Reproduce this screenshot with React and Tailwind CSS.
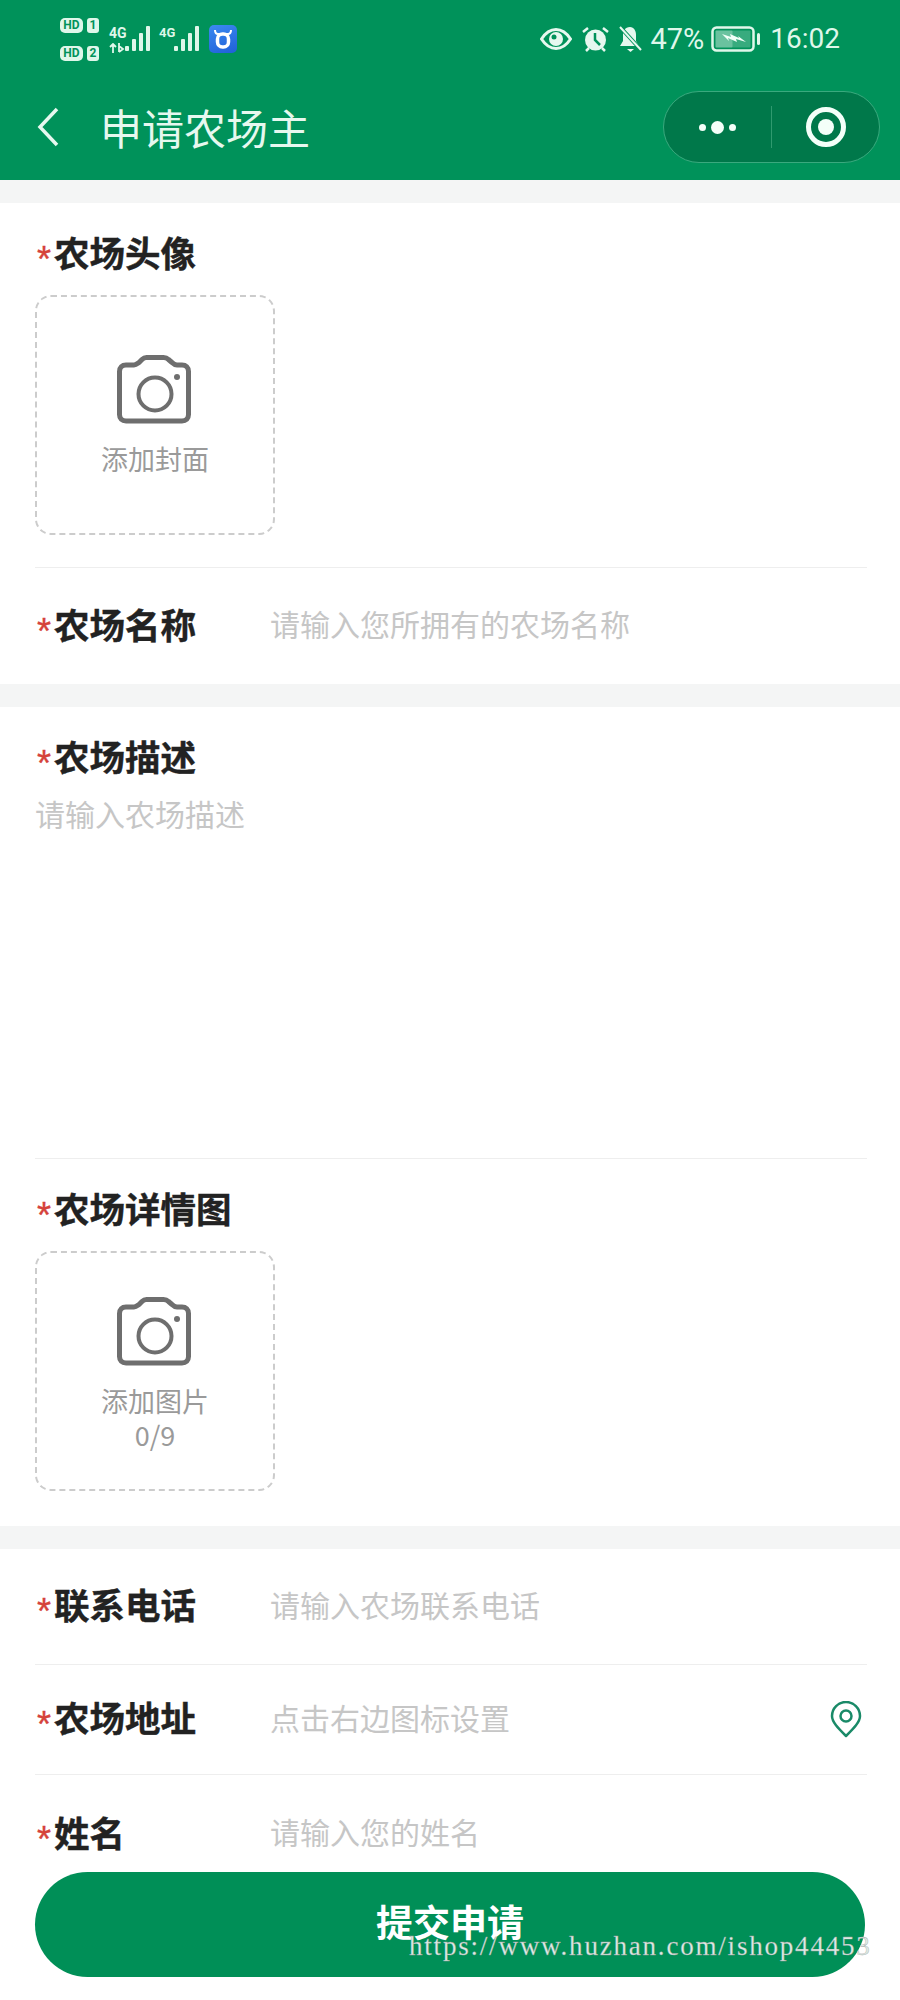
const cjk = "font-['Noto_Sans_CJK_SC',sans-serif]";

// Signal strength bars, heights taken from the status bar
function SignalBars() {
  return (
    <svg width="25" height="26" viewBox="0 0 25 26" fill="#dff7ea">
      <rect x="0" y="20" width="4" height="5" rx="1" />
      <rect x="7" y="13" width="4" height="12" rx="1" />
      <rect x="14" y="7" width="4" height="18" rx="1" />
      <rect x="21" y="0" width="4" height="25" rx="1" />
    </svg>
  );
}

function HdBadge({ n }) {
  return (
    <div className="flex items-center gap-[4px] h-[15px]">
      <span className="w-[23px] h-[15px] rounded-[5px] bg-[#dff7ea] text-[#00925a] text-[12px] leading-[15px] font-bold text-center font-['Roboto',sans-serif]">HD</span>
      <span className="w-[12px] h-[15px] rounded-[3px] bg-[#dff7ea] text-[#00925a] text-[12px] leading-[15px] font-bold text-center font-['Roboto',sans-serif]">{n}</span>
    </div>
  );
}

function StatusBar() {
  return (
    <div className="h-[80px] pl-[60px] pr-[60px] flex justify-between items-start text-[#dff7ea]">
      <div className="flex items-start pt-[18px]">
        <div className="flex flex-col gap-[13px]">
          <HdBadge n="1" />
          <HdBadge n="2" />
        </div>
        <div className="ml-[10px] mt-[8px] w-[16px]">
          <div className="text-[14px] leading-[14px] font-bold font-['Roboto',sans-serif]">4G</div>
          <svg className="mt-[3px]" width="16" height="10" viewBox="0 0 16 10" fill="none" stroke="#dff7ea" strokeWidth="1.800">
            <path d="M4 10V1M1 4l3-3 3 3M10 0v9M10 9l4-3-4-3" />
          </svg>
        </div>
        <div className="mt-[8px]"><SignalBars /></div>
        <div className="ml-[9px] mt-[8px] w-[15px] text-[13px] leading-[14px] font-bold font-['Roboto',sans-serif]">4G</div>
        <div className="mt-[8px]"><SignalBars /></div>
        <div className="ml-[10px] mt-[7px] w-[28px] h-[28px] rounded-[5px] bg-[linear-gradient(160deg,#3c8af0,#1f60d8)] flex items-center justify-center">
          <svg width="20" height="20" viewBox="0 0 20 20" fill="none">
            <path d="M2 1c0 3 1 4 3 4h10c2 0 3-1 3-4" stroke="#fff" strokeWidth="2" />
            <rect x="4.500" y="5" width="11" height="13" rx="5" stroke="#fff" strokeWidth="3.500" />
          </svg>
        </div>
      </div>
      <div className="flex items-center mt-[25px] h-[28px]">
        <svg width="32" height="24" viewBox="0 0 32 24" fill="none">
          <path d="M1.500 12C6 5 11 2.500 16 2.500S26 5 30.500 12C26 19 21 21.500 16 21.500S6 19 1.500 12Z" stroke="#e6f8ef" strokeWidth="3" />
          <circle cx="16" cy="12" r="7" fill="#e6f8ef" />
          <circle cx="14" cy="10" r="2.500" fill="#00925a" />
        </svg>
        <svg className="ml-[10px]" width="27" height="27" viewBox="0 0 27 27" fill="none">
          <circle cx="13.500" cy="14" r="10.500" fill="#e6f8ef" />
          <path d="M13 7v7l5 5" stroke="#00925a" strokeWidth="2.500" />
          <path d="M1 6l5-4M26 6l-5-4M4 25l3-3M23 25l-3-3" stroke="#e6f8ef" strokeWidth="2.500" />
        </svg>
        <svg className="ml-[9px]" width="25" height="28" viewBox="0 0 25 28" fill="none">
          <path d="M12 2c-5 0-7 4-7 8v6l-3 5h19l-3-5v-6c0-4-2-8-6-8Z" fill="#e6f8ef" />
          <path d="M9 24h7l-3.500 3Z" fill="#e6f8ef" />
          <path d="M3 3l20 22" stroke="#00925a" strokeWidth="4" />
          <path d="M2 2l21 23" stroke="#e6f8ef" strokeWidth="2" />
        </svg>
        <span className="ml-[7px] text-[29px] leading-none font-['Roboto',sans-serif]">47%</span>
        <svg className="ml-[7px]" width="49" height="26" viewBox="0 0 49 26" fill="none">
          <rect x="1.500" y="1.500" width="41" height="23" rx="4" stroke="#dff7ea" strokeWidth="2.500" />
          <rect x="4.500" y="4.500" width="35" height="17" rx="1" fill="#dff7ea" opacity="0.25" />
          <rect x="4.500" y="4.500" width="17" height="17" rx="1" fill="#dff7ea" opacity="0.3" />
          <path d="M11 8l9 3-1-3 9 4-1-2 8 6-10-3 1 3-9-4 1 3Z" fill="#f2fff8" />
          <rect x="46" y="7" width="3" height="12" rx="1.500" fill="#dff7ea" />
        </svg>
        <span className="ml-[10px] text-[28px] leading-none font-['Roboto',sans-serif]">16:02</span>
      </div>
    </div>
  );
}

function NavBar() {
  return (
    <div className="h-[100px] flex items-start text-[#e6f8ef]">
      <svg className="ml-[37px] mt-[27px]" width="22" height="40" viewBox="0 0 22 40" fill="none">
        <path d="M20 2L3 20l17 18" stroke="#e6f8ef" strokeWidth="3.500" />
      </svg>
      <span className={`ml-[41px] mt-[19px] text-[42px] leading-[56px] ${cjk}`}>申请农场主</span>
      <div className="ml-auto mr-[20px] mt-[11px] w-[217px] h-[72px] rounded-full bg-[#00784a] border border-[#3aa97e] flex items-center">
        <div className="w-[107px] flex items-center justify-center gap-[5px]">
          <span className="w-[7px] h-[7px] rounded-full bg-[#f4fff9]" />
          <span className="w-[13px] h-[13px] rounded-full bg-[#f4fff9]" />
          <span className="w-[7px] h-[7px] rounded-full bg-[#f4fff9]" />
        </div>
        <div className="w-px h-[42px] bg-[#2f9a6f]" />
        <div className="flex-1 flex items-center justify-center">
          <span className="w-[40px] h-[40px] rounded-full border-[5px] border-[#f4fff9] flex items-center justify-center">
            <span className="w-[16px] h-[16px] rounded-full bg-[#f4fff9]" />
          </span>
        </div>
      </div>
    </div>
  );
}

function FieldLabel({ text }) {
  return (
    <div className={`flex items-center h-[50px] text-[35.500px] font-bold text-[#222222] [-webkit-text-stroke:0.4px_#222222] ${cjk}`}>
      <span className="w-[19px] pl-[2px] mt-[11px] text-[36px] font-normal text-[#d5423a] [-webkit-text-stroke:0.4px_#d5423a] font-['Liberation_Sans',sans-serif]">*</span>
      <span className="whitespace-nowrap pb-[5px]">{text}</span>
    </div>
  );
}

function CameraIcon() {
  return (
    <svg width="78" height="70" viewBox="0 0 78 70" fill="none">
      <path
        d="M10 10h8c2 0 3-1 5-2.500l3-3c1.500-1.500 2.500-2 4.500-2h17c2 0 3.500 .5 5 2l3.500 3c1.500 1.500 3 2.500 5 2.500h5c4 0 6.500 2.500 6.500 6.500v43c0 4-2.500 6.500-6.500 6.500H10c-4 0-6.500-2.500-6.500-6.500v-43C3.500 12.500 6 10 10 10Z"
        stroke="#6e6e6e"
        strokeWidth="5"
        strokeLinejoin="round"
      />
      <circle cx="39" cy="39" r="16.500" stroke="#6e6e6e" strokeWidth="4" />
      <circle cx="61" cy="22" r="3" fill="#6e6e6e" />
    </svg>
  );
}

function UploadBox({ lines, className }) {
  return (
    <div className={`w-[240px] h-[240px] rounded-[16px] border-2 border-dashed border-[#cccccc] flex flex-col items-center ${className}`}>
      <CameraIcon />
      <div className={`mt-[17px] text-[27px] leading-[34px] text-[#9a9a9a] text-center ${cjk}`}>
        {lines.map((line) => (
          <div key={line}>{line}</div>
        ))}
      </div>
    </div>
  );
}

function InputRow({ label, placeholder, className, children }) {
  return (
    <div className={`flex items-center ${className}`}>
      <div className="w-[235px]"><FieldLabel text={label} /></div>
      <span className={`pb-[5px] text-[30px] text-[#c6c6c6] ${cjk}`}>{placeholder}</span>
      {children}
    </div>
  );
}

const Divider = () => <div className="h-px bg-[#eeeeee]" />;
const Gap = () => <div className="h-[23px] bg-[#f4f5f5]" />;

export default function App() {
  return (
    <div className="relative w-[900px] h-[2000px] overflow-hidden bg-white">
      <div className="h-[180px] bg-[#00925a]">
        <StatusBar />
        <NavBar />
      </div>
      <Gap />

      <div className="pl-[35px] pr-[33px] pt-[26px]">
        <FieldLabel text="农场头像" />
        <UploadBox lines={['添加封面']} className="mt-[16px] pt-[58px]" />
        <div className="mt-[32px]"><Divider /></div>
        <InputRow label="农场名称" placeholder="请输入您所拥有的农场名称" className="h-[116px]" />
      </div>
      <Gap />

      <div className="pl-[35px] pr-[33px] pt-[26px]">
        <FieldLabel text="农场描述" />
        <div className={`h-[375px] pt-[10px] text-[30px] leading-[40px] text-[#c6c6c6] ${cjk}`}>请输入农场描述</div>
        <Divider />
        <div className="mt-[26px]"><FieldLabel text="农场详情图" /></div>
        <UploadBox lines={['添加图片', '0/9']} className="mt-[16px] pt-[44px]" />
        <div className="h-[35px]" />
      </div>
      <Gap />

      <div className="pl-[35px] pr-[33px]">
        <InputRow label="联系电话" placeholder="请输入农场联系电话" className="h-[115px]" />
        <Divider />
        <InputRow label="农场地址" placeholder="点击右边图标设置" className="h-[109px]">
          <svg className="ml-auto mr-[5px]" width="32" height="37" viewBox="0 0 32 37" fill="none">
            <path d="M16 35C8 27 2 21 2 15a14 14 0 0 1 28 0c0 6-6 12-14 20Z" stroke="#1a8a68" strokeWidth="2.500" strokeLinejoin="round" />
            <circle cx="16" cy="15" r="5.500" stroke="#1a8a68" strokeWidth="2.500" />
          </svg>
        </InputRow>
        <Divider />
        <InputRow label="姓名" placeholder="请输入您的姓名" className="h-[118px]" />
      </div>

      {/* Submit button floats over the form */}
      <div className={`absolute left-[35px] top-[1872px] w-[830px] h-[105px] pb-[5px] rounded-full bg-[#008f57] flex items-center justify-center text-[37px] font-bold text-white ${cjk}`}>
        提交申请
      </div>

      {/* Site watermark stamped on the screenshot */}
      <div className="absolute left-[409px] top-[1929px] text-[27px] leading-[34px] tracking-[1.800px] whitespace-nowrap text-[#dcebe4] [-webkit-text-stroke:0.3px_#9a9a9a] font-['Liberation_Serif',serif]">
        https://www.huzhan.com/ishop44453
      </div>
    </div>
  );
}
